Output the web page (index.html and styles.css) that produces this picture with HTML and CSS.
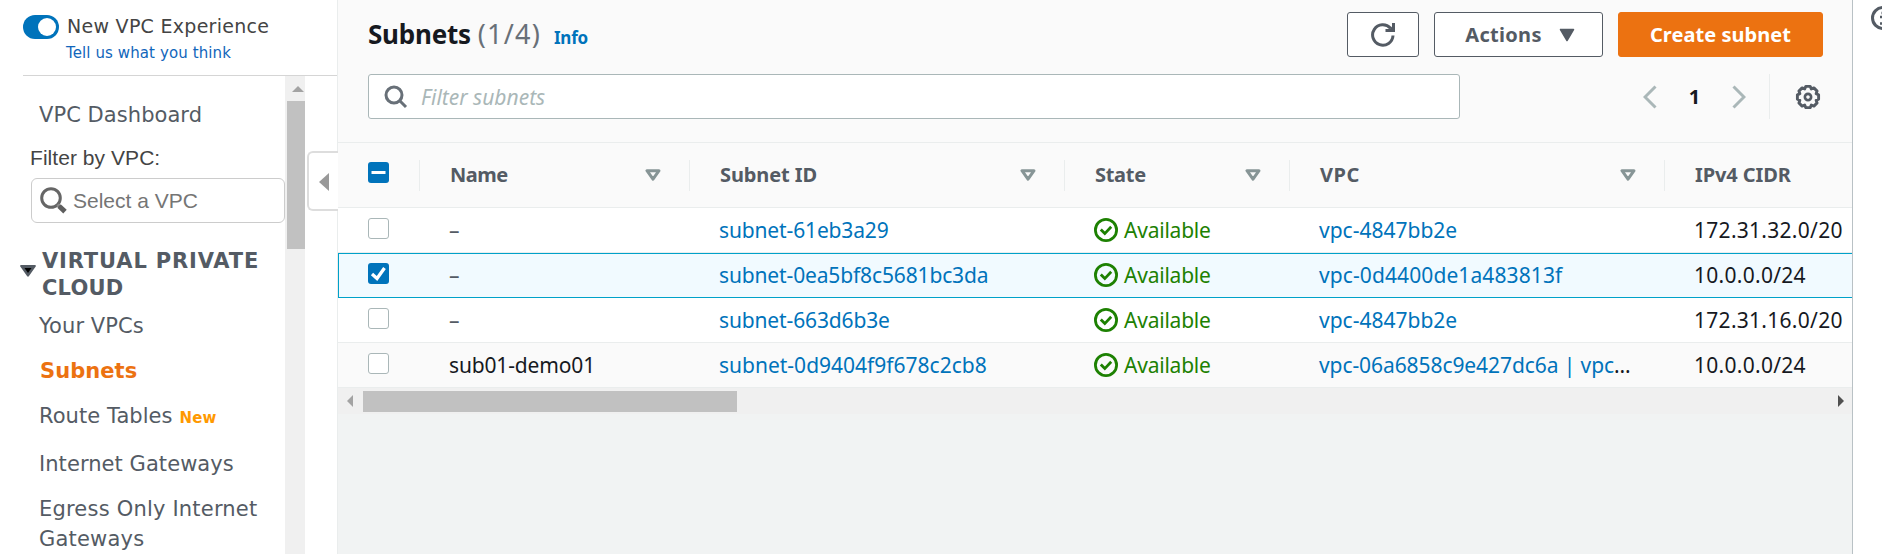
FILE: index.html
```html
<!DOCTYPE html>
<html lang="en">
<head>
<meta charset="utf-8">
<title>Subnets</title>
<link rel="stylesheet" href="styles.css">
</head>
<body>
<svg class="defs" aria-hidden="true">
  <symbol id="sort" viewBox="0 0 16 12"><path d="M2 1.7h12L8 10.2z" fill="none" stroke="currentColor" stroke-width="3" stroke-linejoin="round"/></symbol>
  <symbol id="ok" viewBox="0 0 24 24"><circle cx="12" cy="12" r="10.6" fill="none" stroke="currentColor" stroke-width="2.8"/><path d="M6.8 11.6l4 4 6.4-6.8" fill="none" stroke="currentColor" stroke-width="2.8"/></symbol>
</svg>
<div class="app">
  <aside class="sidebar">
    <header class="side-head">
      <span class="toggle"><span class="knob"></span></span>
      <div>
        <div class="exp">New VPC Experience</div>
        <a class="tell">Tell us what you think</a>
      </div>
    </header>
    <div class="side-body">
      <nav class="nav">
        <a class="item dash">VPC Dashboard</a>
        <div class="filter-label">Filter by VPC:</div>
        <div class="vpc-select">
          <svg width="27" height="27" viewBox="0 0 27 27"><circle cx="11" cy="11" r="9.3" fill="none" stroke="#666" stroke-width="3"/><path d="M17.5 17.5l2 2" stroke="#888" stroke-width="3"/><path d="M19 19l6 5.6" stroke="#5e5e5e" stroke-width="5"/></svg>
          <span>Select a VPC</span>
        </div>
        <div class="group">
          <svg width="16" height="12" viewBox="0 0 16 12"><path d="M1 0h14a1 1 0 0 1 .7 1.600L9 11q-1 1.500-2 0L.3 1.600A1 1 0 0 1 1 0z" fill="#545b64"/><path d="M4.500 3h7L8 8z" fill="#000"/></svg>
          <div><div class="g1">VIRTUAL PRIVATE</div><div class="g2">CLOUD</div></div>
        </div>
        <a class="item i1">Your VPCs</a>
        <a class="item i2 active">Subnets</a>
        <a class="item i3">Route Tables<span class="new">New</span></a>
        <a class="item i4">Internet Gateways</a>
        <a class="item i5">Egress Only Internet Gateways</a>
      </nav>
      <div class="vscroll"><svg width="12" height="6" viewBox="0 0 12 6"><path d="M0 6L6 0l6 6z" fill="#a3a3a3"/></svg><div class="vthumb"></div></div>
    </div>
    <div class="collapse"><svg width="10" height="18" viewBox="0 0 10 18"><path d="M10 0v18L0 9z" fill="#999"/></svg></div>
  </aside>
  <main class="main">
    <header class="panel-head">
      <div class="row1">
        <h1>Subnets</h1><span class="count">(1/4)</span><a class="info">Info</a>
        <div class="actions">
          <button class="btn refresh"><svg width="24" height="24" viewBox="0 0 24 24"><path d="M22 12.500A10.200 10.200 0 1 1 19.500 5.300" fill="none" stroke="#545b64" stroke-width="3"/><path d="M14.500 7.500h8V0" fill="none" stroke="#545b64" stroke-width="3"/><path d="M17 7.500l5-5v5z" fill="#545b64"/></svg></button>
          <button class="btn act"><span>Actions</span><svg width="16" height="14" viewBox="0 0 16 14"><path d="M1.500 1.500h13L8 12.500z" fill="#545b64" stroke="#545b64" stroke-width="1.500" stroke-linejoin="round"/></svg></button>
          <button class="btn create">Create subnet</button>
        </div>
      </div>
      <div class="row2">
        <div class="search"><svg width="24" height="24" viewBox="0 0 24 24"><circle cx="10" cy="10" r="8" fill="none" stroke="#687078" stroke-width="3"/><path d="M15.500 15.500l6.500 6.500" stroke="#687078" stroke-width="3"/></svg><span>Filter subnets</span></div>
        <div class="pager">
          <svg width="14" height="24" viewBox="0 0 14 24"><path d="M12.500 1.500L2 12l10.500 10.500" fill="none" stroke="#aab7b8" stroke-width="3"/></svg>
          <b>1</b>
          <svg width="14" height="24" viewBox="0 0 14 24"><path d="M1.500 1.500L12 12 1.500 22.500" fill="none" stroke="#aab7b8" stroke-width="3"/></svg>
        </div>
        <div class="prefs"><svg width="26" height="26" viewBox="-13 -13 26 26" fill="none" stroke="#545b64" stroke-width="2.900"><circle r="3.100" stroke-width="2.700"/><path stroke-linejoin="round" d="M-2.200-10.600H2.200L3.300-8.100 5.900-9.100 9.100-5.900 8.100-3.300 10.600-2.200V2.200L8.100 3.300 9.100 5.900 5.900 9.100 3.300 8.100 2.200 10.600H-2.200L-3.300 8.100-5.900 9.100-9.100 5.900-8.100 3.300-10.600 2.200V-2.200L-8.100-3.300-9.100-5.900-5.900-9.100-3.300-8.100z"/></svg></div>
      </div>
    </header>
    <div class="grid thead">
      <div class="sel"><span class="cb on"><svg width="21" height="21"><path d="M3.500 10.500h14" stroke="#fff" stroke-width="3"/></svg></span></div>
      <div class="th"><span class="h-name">Name</span><svg class="sort"><use href="#sort"/></svg></div>
      <div class="th"><span class="h-id">Subnet ID</span><svg class="sort"><use href="#sort"/></svg></div>
      <div class="th"><span class="h-state">State</span><svg class="sort"><use href="#sort"/></svg></div>
      <div class="th"><span class="h-vpc">VPC</span><svg class="sort"><use href="#sort"/></svg></div>
      <div class="th"><span class="h-cidr">IPv4 CIDR</span></div>
    </div>
    <div class="grid tr">
      <div class="sel"><span class="cb"></span></div><div class="td dash-v">–</div><div class="td link tight">subnet-61eb3a29</div>
      <div class="td state"><svg><use href="#ok"/></svg><span>Available</span></div><div class="td link">vpc-4847bb2e</div><div class="td cidr">172.31.32.0/20</div>
    </div>
    <div class="grid tr picked">
      <div class="sel"><span class="cb on"><svg width="21" height="21"><path d="M4 11l5 4.500L16.500 5" fill="none" stroke="#fff" stroke-width="3.300"/></svg></span></div><div class="td dash-v">–</div><div class="td link tight">subnet-0ea5bf8c5681bc3da</div>
      <div class="td state"><svg><use href="#ok"/></svg><span>Available</span></div><div class="td link wide">vpc-0d4400de1a483813f</div><div class="td cidr">10.0.0.0/24</div>
    </div>
    <div class="grid tr">
      <div class="sel"><span class="cb"></span></div><div class="td dash-v">–</div><div class="td link tight">subnet-663d6b3e</div>
      <div class="td state"><svg><use href="#ok"/></svg><span>Available</span></div><div class="td link">vpc-4847bb2e</div><div class="td cidr">172.31.16.0/20</div>
    </div>
    <div class="grid tr alt">
      <div class="sel"><span class="cb"></span></div><div class="td name">sub01-demo01</div><div class="td link">subnet-0d9404f9f678c2cb8</div>
      <div class="td state"><svg><use href="#ok"/></svg><span>Available</span></div><div class="td link long">vpc-06a6858c9e427dc6a | vpc<span class="dots">…</span></div><div class="td cidr">10.0.0.0/24</div>
    </div>
    <div class="hscroll">
      <svg width="6" height="12" viewBox="0 0 6 12"><path d="M6 0v12L0 6z" fill="#a3a3a3"/></svg>
      <div class="hthumb"></div>
      <svg width="6" height="12" viewBox="0 0 6 12"><path d="M0 0v12l6-6z" fill="#505050"/></svg>
    </div>
  </main>
  <aside class="help"><svg width="24" height="24" viewBox="0 0 24 24"><circle cx="12" cy="12" r="10.500" fill="none" stroke="#545b64" stroke-width="3"/><path d="M9 11h3.500v6M9 17.500h6.500M10.500 7h3" fill="none" stroke="#545b64" stroke-width="2.600"/></svg></aside>
</div>
</body>
</html>
```
FILE: styles.css
```css
* { box-sizing: border-box; }
body { margin: 0; background: #fff; font-family: "Noto Sans", "Open Sans", sans-serif; font-size: 21px; color: #16191f; }
svg { display: block; flex: none; }
.defs { position: absolute; width: 0; height: 0; }
.app { display: flex; width: 1882px; height: 554px; overflow: hidden; white-space: nowrap; }

/* Sidebar */
.sidebar { position: relative; flex: none; width: 338px; height: 554px; display: flex; flex-direction: column; font-family: "DejaVu Sans", sans-serif; border-right: 1px solid #eaeded; }
.side-head { display: flex; flex: none; height: 76px; margin-left: 23px; padding-top: 12px; border-bottom: 1px solid #d5d5d5; }
.toggle { width: 36px; height: 24px; margin: 3px 8px 0 0; border-radius: 12px; background: #0073bb; }
.knob { display: block; width: 18px; height: 18px; margin: 3px 0 0 15px; border-radius: 50%; background: #fff; }
.exp { font-size: 19px; line-height: 28px; letter-spacing: .28px; color: #444; }
.tell { display: block; font-size: 15px; line-height: 26px; color: #1166bb; letter-spacing: .1px; margin-left: -1px; }
.side-body { display: flex; flex: 1; min-height: 0; }
.nav { width: 285px; flex: none; display: flex; flex-direction: column; color: #545b64; overflow: hidden; }
.item { flex: none; padding-left: 39px; line-height: 30px; letter-spacing: .06px; }
.dash { margin-top: 24px; }
.filter-label { margin: 13px 0 0 30px; line-height: 30px; font-family: "Liberation Sans", sans-serif; color: #444; letter-spacing: .05px; }
.vpc-select { display: flex; flex: none; align-items: center; height: 45px; margin: 5px 0 0 31px; padding-left: 8px; gap: 6px; border: 1px solid #ccc; border-radius: 6px; font-family: "Liberation Sans", sans-serif; color: #757575; letter-spacing: 0; }
.group { display: flex; flex: none; margin: 25px 0 0 20px; font-weight: bold; line-height: 27px; }
.group > svg { margin: 17px 6px 0 0; }
.g1 { letter-spacing: .85px; }
.g2 { letter-spacing: .2px; }
.i1 { margin-top: 9px; }
.i2 { margin-top: 15px; }
.i3 { margin-top: 15px; }
.i4 { margin-top: 16px; }
.i5 { margin-top: 15px; white-space: normal; letter-spacing: .2px; }
.active { color: #ec7211; font-weight: bold; padding-left: 40px; }
.new { margin-left: 7px; color: #ff9900; font-size: 15px; font-weight: bold; }
.vscroll { width: 20px; background: #f0f0f0; padding-top: 10px; }
.vscroll svg { margin-left: 7px; }
.vthumb { height: 148px; margin: 9px 0 0 2px; background: #c1c1c1; }
.collapse { position: absolute; left: 307px; top: 151px; width: 31px; height: 60px; padding: 20px 0 0 10px; background: #fff; border: 2px solid #ddd; border-right: 0; border-radius: 6px 0 0 6px; }

/* Subnets panel */
.main { width: 1515px; flex: none; background: #f1f3f3; border-right: 1px solid #b9c1c5; }
.panel-head { height: 142px; padding: 12px 29px 0 30px; background: #fafafa; }
.row1 { display: flex; height: 45px; align-items: baseline; }
h1 { margin: 0; font-size: 26px; line-height: 44px; letter-spacing: -.23px; }
.count { font-size: 27px; line-height: 44px; margin-left: 7px; color: #687078; letter-spacing: 1.2px; }
.info { font-size: 17px; font-weight: bold; color: #0073bb; margin-left: 13px; letter-spacing: -.2px; }
.actions { display: flex; gap: 15px; margin-left: auto; align-self: flex-start; }
.btn { display: flex; align-items: center; justify-content: center; height: 45px; padding: 0; border: 1px solid #545b64; border-radius: 3px; background: #fff; color: #545b64; font: bold 20px "Noto Sans", sans-serif; }
.refresh { width: 72px; }
.act { width: 169px; gap: 17px; padding-left: 3px; letter-spacing: .3px; }
.create { width: 205px; background: #ec7211; border-color: #ec7211; color: #fff; letter-spacing: .06px; }
.row2 { display: flex; height: 45px; margin-top: 17px; align-items: center; }
.search { display: flex; align-items: center; width: 1092px; height: 45px; padding-left: 15px; gap: 13px; background: #fff; border: 1px solid #aab7b8; border-radius: 3px; font-style: italic; color: #aab7b8; }
.pager { display: flex; align-items: center; justify-content: space-between; width: 103px; margin-left: 183px; }
.pager b { font-size: 20px; }
.prefs { display: flex; align-items: center; height: 45px; margin-left: 23px; padding-left: 25px; border-left: 1px solid #eaeded; }

/* Table */
.grid { display: grid; grid-template-columns: 81px 270px 375px 225px 375px 188px; align-items: center; background: #fff; }
.sel { padding-left: 30px; }
.cb { display: block; width: 21px; height: 21px; border: 1.5px solid #aab7b8; border-radius: 3px; background: #fff; }
.cb.on { border: 0; background: #0073bb; }
.thead { height: 66px; background: #fafafa; border-top: 1px solid #eaeded; border-bottom: 1px solid #eaeded; color: #545b64; font-weight: bold; font-size: 20px; }
.thead .sel { padding-bottom: 6px; }
.th { display: flex; align-items: center; justify-content: space-between; height: 31px; padding: 0 28px 0 30px; border-left: 1px solid #eaeded; }
.th span { padding-bottom: 2px; }
.sort { width: 16px; height: 12px; color: #879596; }
.h-name { letter-spacing: -.5px; }
.h-id, .h-cidr { letter-spacing: -.1px; }
.h-state { letter-spacing: -.3px; }
.h-vpc { letter-spacing: .5px; }
.tr { height: 45px; border-bottom: 1px solid #eaeded; }
.tr .sel { padding-bottom: 4px; }
.td { padding-left: 30px; line-height: 30px; padding-bottom: 1px; }
.dash-v { color: #545b64; }
.link { color: #0073bb; letter-spacing: 0; }
.tight { letter-spacing: -.14px; }
.wide { letter-spacing: .1px; }
.long { letter-spacing: -.08px; }
.name { letter-spacing: -.15px; }
.dots { color: #16191f; }
.cidr { letter-spacing: .28px; }
.state { display: flex; align-items: center; gap: 6px; color: #1d8102; letter-spacing: -.22px; }
.state svg { width: 24px; height: 24px; }
.picked { background: #f1faff; box-shadow: inset 1px 1px #00a1c9; border-bottom-color: #00a1c9; }
.alt { background: #fafafa; }
.hscroll { display: flex; align-items: center; height: 26px; padding: 0 8px 0 9px; background: #f0f0f0; }
.hthumb { width: 374px; height: 21px; margin: 0 auto 0 10px; background: #c1c1c1; }

.help { flex: 1; padding: 6px 0 0 18px; overflow: hidden; }
```
